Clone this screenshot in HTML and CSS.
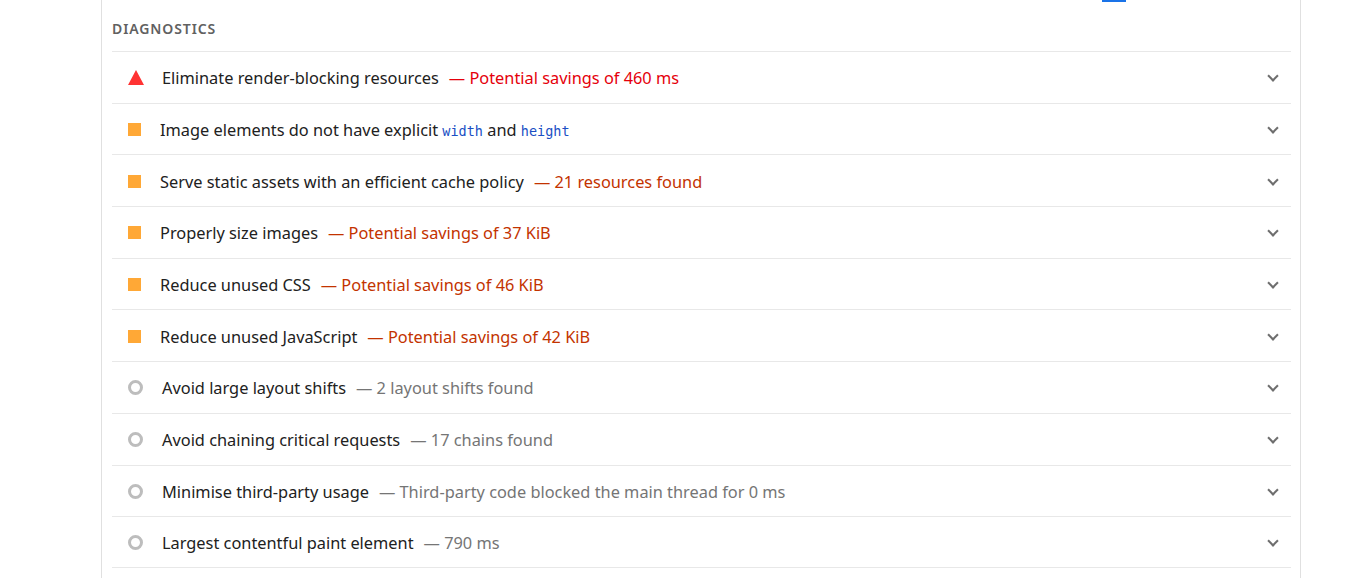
FILE: index.html
```html
<!DOCTYPE html>
<html lang="en">
<head>
<meta charset="utf-8">
<title>Diagnostics</title>
<link rel="stylesheet" href="styles.css">
</head>
<body>
<div class="topbar"><span class="blue-tab"></span></div>
<section class="report">
  <h2 class="group-title">DIAGNOSTICS</h2>
  <ul class="audits">
    <li class="audit">
      <span class="icon fail"></span>
      <span class="title">Eliminate render-blocking resources</span>
      <span class="display fail-text">— Potential savings of 460 ms</span>
      <span class="chevron"></span>
    </li>
    <li class="audit">
      <span class="icon average"></span>
      <span class="title">Image elements do not have explicit <code>width</code> and <code>height</code></span>
      <span class="chevron"></span>
    </li>
    <li class="audit">
      <span class="icon average"></span>
      <span class="title">Serve static assets with an efficient cache policy</span>
      <span class="display avg-text">— 21 resources found</span>
      <span class="chevron"></span>
    </li>
    <li class="audit">
      <span class="icon average"></span>
      <span class="title">Properly size images</span>
      <span class="display avg-text">— Potential savings of 37 KiB</span>
      <span class="chevron"></span>
    </li>
    <li class="audit">
      <span class="icon average"></span>
      <span class="title">Reduce unused CSS</span>
      <span class="display avg-text">— Potential savings of 46 KiB</span>
      <span class="chevron"></span>
    </li>
    <li class="audit">
      <span class="icon average"></span>
      <span class="title">Reduce unused JavaScript</span>
      <span class="display avg-text">— Potential savings of 42 KiB</span>
      <span class="chevron"></span>
    </li>
    <li class="audit">
      <span class="icon info"></span>
      <span class="title">Avoid large layout shifts</span>
      <span class="display info-text">— 2 layout shifts found</span>
      <span class="chevron"></span>
    </li>
    <li class="audit">
      <span class="icon info"></span>
      <span class="title">Avoid chaining critical requests</span>
      <span class="display info-text">— 17 chains found</span>
      <span class="chevron"></span>
    </li>
    <li class="audit">
      <span class="icon info"></span>
      <span class="title">Minimise third-party usage</span>
      <span class="display info-text">— Third-party code blocked the main thread for 0 ms</span>
      <span class="chevron"></span>
    </li>
    <li class="audit">
      <span class="icon info"></span>
      <span class="title">Largest contentful paint element</span>
      <span class="display info-text">— 790 ms</span>
      <span class="chevron"></span>
    </li>
  </ul>
</section>
</body>
</html>
```

FILE: styles.css
```css
* { box-sizing: border-box; }

html, body {
  margin: 0;
  padding: 0;
  background: #ffffff;
  height: 100%;
  overflow: hidden;
}

body {
  font-family: "Noto Sans", "Open Sans", sans-serif;
  color: #212121;
  position: relative;
}

.topbar {
  position: absolute;
  top: 0;
  left: 1102px;
}

.blue-tab {
  display: block;
  width: 24px;
  height: 2px;
  background: #1a73e8;
}

.report {
  margin-left: 101px;
  width: 1200px;
  min-height: 578px;
  border-left: 1px solid #e0e0e0;
  border-right: 1px solid #e0e0e0;
  padding: 0 9px 0 10px;
}

.group-title {
  margin: 0;
  height: 51px;
  display: flex;
  align-items: center;
  padding-top: 6px;
  font-size: 14px;
  font-weight: 600;
  letter-spacing: 0.9px;
  color: #616161;
}

.audits {
  list-style: none;
  margin: 0;
  padding: 0;
}

.audit {
  display: flex;
  align-items: center;
  height: 51.7px;
  border-top: 1px solid #e8e8e8;
  padding-left: 16px;
  padding-right: 12px;
  padding-top: 2px;
  font-size: 16.35px;
  white-space: nowrap;
}

.audit:last-child {
  border-bottom: 1px solid #e8e8e8;
}

.icon {
  flex: none;
}

.icon.fail {
  width: 0;
  height: 0;
  border-left: 8px solid transparent;
  border-right: 8px solid transparent;
  border-bottom: 15px solid #ff3333;
  margin-right: 18px;
  margin-top: -2px;
}

.icon.average {
  width: 13px;
  height: 13px;
  background: #ffa836;
  margin-right: 19px;
  margin-top: -1px;
}

.icon.info {
  width: 15px;
  height: 15px;
  border-radius: 50%;
  border: 3px solid #bdbdbd;
  margin-right: 19px;
  margin-top: -1px;
}

.title {
  color: #212121;
}

.display {
  margin-left: 10px;
}

.fail-text { color: #e5000b; }
.avg-text { color: #c33300; }
.info-text { color: #757575; }

code {
  font-family: "DejaVu Sans Mono", "Liberation Mono", monospace;
  font-size: 13.5px;
  color: #1a4fc4;
}

.chevron {
  flex: none;
  margin-left: auto;
  width: 8px;
  height: 8px;
  border-right: 2px solid #6e6e6e;
  border-bottom: 2px solid #6e6e6e;
  transform: translate(-2px, -2px) rotate(45deg);
}
```
